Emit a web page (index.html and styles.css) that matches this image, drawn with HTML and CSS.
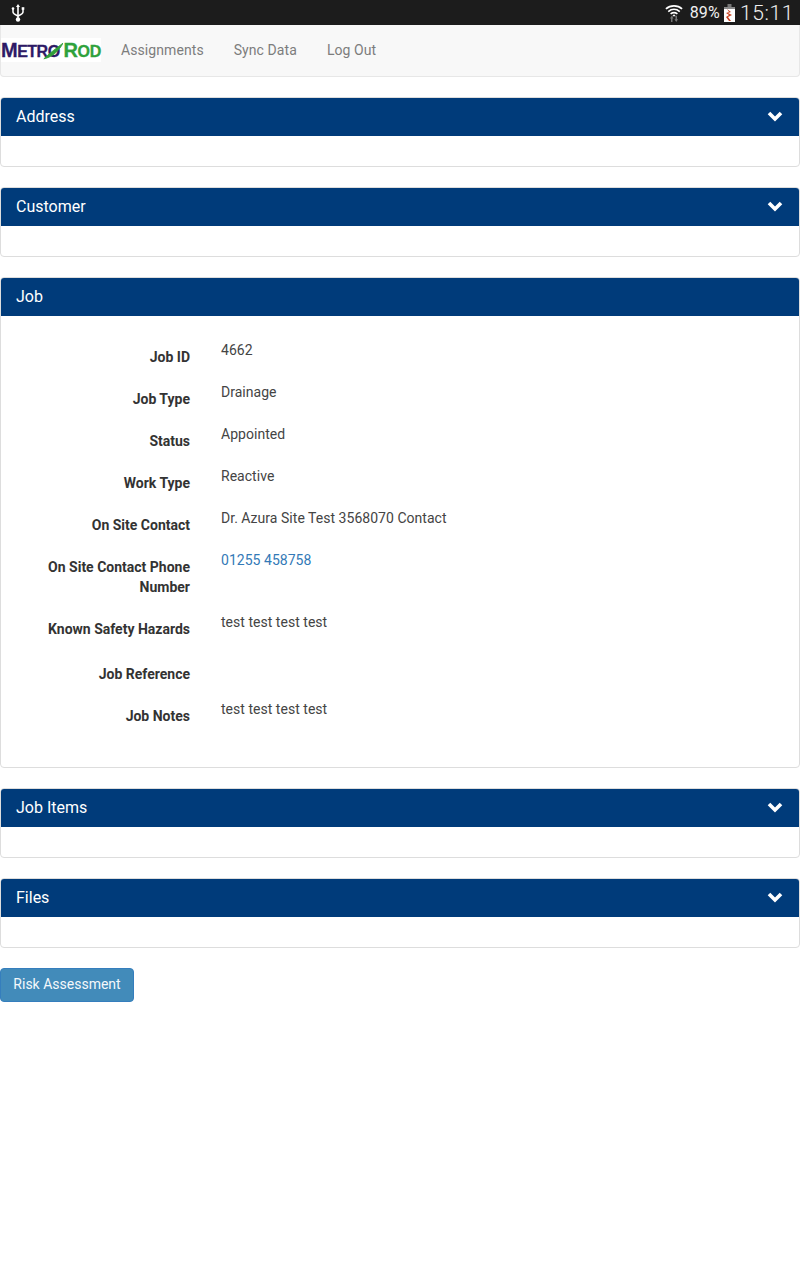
FILE: index.html
```html
<!DOCTYPE html>
<html lang="en">
<head>
    <meta charset="UTF-8">
    <meta name="viewport" content="width=device-width, initial-scale=1.0">
    <title>Job</title>
    <link rel="stylesheet" href="styles.css">
</head>
<body>
    <div class="statusbar">
        <svg class="usb-icon" width="14" height="20" viewBox="0 0 14 20">
            <path d="M7 1 L9 4 H7.8 V15 H6.2 V4 H5 Z" fill="#fff"/>
            <circle cx="7" cy="16.5" r="2.2" fill="#fff"/>
            <path d="M2 6 V9 C2 11 4 11.5 7 13 C10 11.5 12 11 12 9 V6" fill="none" stroke="#fff" stroke-width="1.5"/>
            <rect x="0.7" y="4.2" width="2.6" height="2.6" rx="1.3" fill="#fff"/>
            <rect x="10.7" y="4.2" width="2.6" height="2.6" fill="#fff"/>
        </svg>
        <div class="status-right">
            <svg class="wifi-icon" width="18" height="20" viewBox="0 0 20 20">
                <path d="M1 5.5 C6 1 14 1 19 5.5" fill="none" stroke="#fff" stroke-width="1.8"/>
                <path d="M3.6 8.4 C7.4 5.2 12.6 5.2 16.4 8.4" fill="none" stroke="#fff" stroke-width="1.8"/>
                <path d="M6.2 11 C8.6 9.2 11.4 9.2 13.8 11" fill="none" stroke="#fff" stroke-width="1.8"/>
                <path d="M10 11.5 L12 13.5 H8 Z" fill="#fff"/>
                <path d="M7.5 13 L9.5 16 H8.3 V20 H6.7 V16 H5.5 Z M12.5 20 L10.5 17 H11.7 V13 H13.3 V17 H14.5 Z" fill="#777"/>
            </svg>
            <span class="battery-pct">89%</span>
            <svg class="battery-icon" width="11" height="18" viewBox="0 0 11 18">
                <rect x="3.5" y="0" width="4" height="3" fill="#777"/>
                <rect x="0" y="3" width="11" height="15" fill="#fff"/>
                <rect x="0" y="3" width="11" height="2" fill="#888"/>
                <path d="M3 5 L7 8 L4 9 L8 11 L4 13 L7 17 L5 17 L2 13 L5 11 L2 9 L5 8 Z" fill="#c8401e"/>
            </svg>
            <span class="clock">15:11</span>
        </div>
    </div>

    <nav class="navbar">
        <div class="brand">
            <span class="brand-metro">M<small>ETRO</small></span><svg class="swoosh" width="24" height="20" viewBox="0 0 24 20"><path d="M1 19 C7 13 15 7 23 1 C19 9 11 17 1 19 Z" fill="#2f9e3a" stroke="#2f9e3a"/></svg><span class="brand-rod">R<small>OD</small></span>
        </div>
        <a class="nav-link">Assignments</a>
        <a class="nav-link">Sync Data</a>
        <a class="nav-link">Log Out</a>
    </nav>

    <section class="panel">
        <div class="panel-heading">Address
            <svg class="chevron" width="16" height="12" viewBox="0 0 16 12"><path d="M2 3 L8 9 L14 3" fill="none" stroke="#fff" stroke-width="3.6"/></svg>
        </div>
        <div class="panel-body-empty"></div>
    </section>

    <section class="panel">
        <div class="panel-heading">Customer
            <svg class="chevron" width="16" height="12" viewBox="0 0 16 12"><path d="M2 3 L8 9 L14 3" fill="none" stroke="#fff" stroke-width="3.6"/></svg>
        </div>
        <div class="panel-body-empty"></div>
    </section>

    <section class="panel">
        <div class="panel-heading">Job</div>
        <div class="panel-body">
            <div class="field">
                <label>Job ID</label>
                <p>4662</p>
            </div>
            <div class="field">
                <label>Job Type</label>
                <p>Drainage</p>
            </div>
            <div class="field">
                <label>Status</label>
                <p>Appointed</p>
            </div>
            <div class="field">
                <label>Work Type</label>
                <p>Reactive</p>
            </div>
            <div class="field">
                <label>On Site Contact</label>
                <p>Dr. Azura Site Test 3568070 Contact</p>
            </div>
            <div class="field">
                <label>On Site Contact Phone Number</label>
                <p><a class="phone">01255 458758</a></p>
            </div>
            <div class="field field-tall">
                <label>Known Safety Hazards</label>
                <p>test test test test</p>
            </div>
            <div class="field">
                <label>Job Reference</label>
                <p></p>
            </div>
            <div class="field">
                <label>Job Notes</label>
                <p>test test test test</p>
            </div>
        </div>
    </section>

    <section class="panel">
        <div class="panel-heading">Job Items
            <svg class="chevron" width="16" height="12" viewBox="0 0 16 12"><path d="M2 3 L8 9 L14 3" fill="none" stroke="#fff" stroke-width="3.6"/></svg>
        </div>
        <div class="panel-body-empty"></div>
    </section>

    <section class="panel">
        <div class="panel-heading">Files
            <svg class="chevron" width="16" height="12" viewBox="0 0 16 12"><path d="M2 3 L8 9 L14 3" fill="none" stroke="#fff" stroke-width="3.6"/></svg>
        </div>
        <div class="panel-body-empty"></div>
    </section>

    <button class="risk-btn">Risk Assessment</button>
</body>
</html>
```

FILE: styles.css
```css
* {
    box-sizing: border-box;
}

body {
    margin: 0;
    font-family: Roboto, "Liberation Sans", sans-serif;
    font-size: 14px;
    line-height: 20px;
    color: #333;
    background-color: #fff;
}

.statusbar {
    height: 25px;
    background-color: #1c1c1c;
    color: #f0f0f0;
    display: flex;
    align-items: center;
    justify-content: space-between;
    padding: 0 6px 0 11px;
}

.usb-icon {
    display: block;
}

.status-right {
    display: flex;
    align-items: center;
}

.wifi-icon {
    margin-right: 7px;
}

.battery-pct {
    font-size: 16px;
    letter-spacing: 0.2px;
    margin-right: 4px;
}

.battery-icon {
    margin-right: 5px;
}

.clock {
    font-size: 21px;
    font-weight: 300;
    letter-spacing: 0.6px;
}

.navbar {
    height: 52px;
    background-color: #f8f8f8;
    border: 1px solid #e7e7e7;
    border-top: none;
    border-radius: 0 0 4px 4px;
    margin-bottom: 20px;
    display: flex;
    align-items: center;
    padding-bottom: 2px;
}

.brand {
    width: 100px;
    height: 24px;
    margin-right: 20px;
    padding-top: 2px;
    background-color: #fff;
    display: flex;
    align-items: center;
    font-family: "Liberation Sans", sans-serif;
    font-weight: bold;
    font-size: 20px;
    line-height: 20px;
    white-space: nowrap;
    -webkit-text-stroke: 0.3px;
}

.brand small {
    font-size: 16px;
}

.brand-metro {
    color: #2e1a66;
    letter-spacing: -0.5px;
}

.brand-rod {
    color: #2fa23c;
    letter-spacing: -0.3px;
}

.swoosh {
    margin-left: -17px;
}

.nav-link {
    color: #7d7d7d;
    margin-right: 30px;
    letter-spacing: 0.08px;
}

.panel {
    border: 1px solid #ddd;
    border-radius: 4px;
    margin-bottom: 20px;
    background-color: #fff;
    overflow: hidden;
}

.panel-heading {
    height: 38px;
    background-color: #003b7a;
    color: #fff;
    font-size: 16px;
    padding: 0 15px;
    display: flex;
    align-items: center;
    justify-content: space-between;
}

.chevron {
    margin-top: -2px;
    margin-right: 1px;
}

.panel-body-empty {
    height: 30px;
}

.panel-body {
    padding: 24px 0 26px;
}

.field {
    display: grid;
    grid-template-columns: 189px 1fr;
    column-gap: 31px;
    margin-bottom: 15px;
}

.field-tall {
    min-height: 30px;
}

.field label {
    font-weight: bold;
    text-align: right;
    padding: 7px 0 0 30px;
}

.field p {
    margin: 0;
    color: #444;
    letter-spacing: 0.03px;
}

.phone {
    color: #337ab7;
}

.risk-btn {
    display: block;
    height: 34px;
    width: 134px;
    padding: 0 0 2px;
    font-family: Roboto, "Liberation Sans", sans-serif;
    font-size: 14px;
    color: #f4f8fb;
    background-color: #428bba;
    border: 1px solid #357ebd;
    border-radius: 4px;
}
```
